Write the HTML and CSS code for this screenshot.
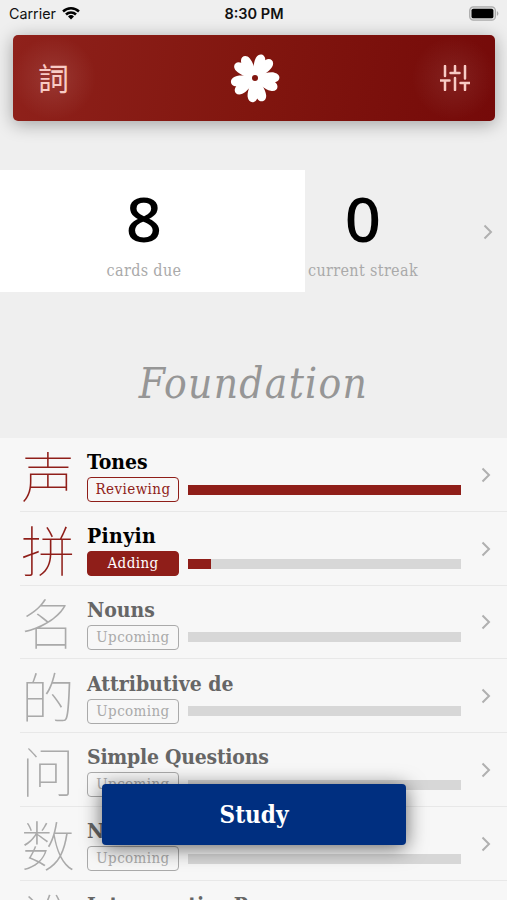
FILE: index.html
```html
<!DOCTYPE html>
<html lang="en">
<head>
<meta charset="utf-8">
<title>Foundation</title>
<link rel="stylesheet" href="styles.css">
</head>
<body>
<main class="app">
  <header class="status">
    <div class="carrier"><span class="carrier-name">Carrier</span>
      <svg class="wifi" viewBox="0 0 18 14"><path d="M0.2 4.6a12.6 12.6 0 0 1 17.6 0l-1.7 1.8a10.1 10.1 0 0 0-14.2 0z"/><path d="M3.1 7.6a8.5 8.5 0 0 1 11.8 0l-1.8 1.8a6 6 0 0 0-8.2 0z"/><path d="M6 10.5a4.3 4.3 0 0 1 6 0l-3 3z"/></svg>
    </div>
    <div class="clock">8:30 PM</div>
    <svg class="battery" viewBox="0 0 31 15"><rect x=".7" y=".7" width="26.6" height="13.6" rx="3.8" fill="#ddd" stroke="#aaa" stroke-width="1.2"/><rect x="2.6" y="2.5" width="22.6" height="10" rx="2"/><path d="M28.8 5v5q1.6-.8 1.6-2.5T28.8 5z" fill="#aaa"/></svg>
  </header>
  <nav class="navbar">
    <span class="glyph-btn">詞</span>
    <svg class="flower" viewBox="-25 -25 50 50">
      <defs><path id="petal" d="M-4 0C-4.500-6-9.300-12-9.300-18C-9.300-24.800-2.500-25.800 0-20.500C2.500-25.800 9.300-24.800 9.300-18C9.300-12 4.500-6 4 0Z"/></defs>
      <g fill="#fff"><use href="#petal" transform="rotate(30)"/><use href="#petal" transform="rotate(102)"/><use href="#petal" transform="rotate(174)"/><use href="#petal" transform="rotate(246)"/><use href="#petal" transform="rotate(318)"/></g>
      <circle r="3" fill="#81160f"/>
    </svg>
    <svg class="sliders" viewBox="0 0 30 26"><path d="M5 1v10M.5 15.500h9M5 15.500V25M15 1v7M10.500 8h9M15 13v12M25 1v12.500M20.500 18h9M25 18v7"/></svg>
  </nav>
  <section class="stats">
    <div class="stat due"><div class="num">8</div><div class="label">cards due</div></div>
    <div class="stat streak"><div class="num">0</div><div class="label">current streak</div></div>
    <svg class="chev" viewBox="0 0 10 16"><path d="M1.500 1.500 8 8l-6.500 6.500"/></svg>
  </section>
  <h1>Foundation</h1>
  <ul class="list">
    <li class="row active"><span class="hanzi">声</span><div class="body"><h2>Tones</h2><div class="meta"><span class="tag">Reviewing</span><span class="track"><span class="fill" style="width:100%"></span></span></div></div><svg class="chev" viewBox="0 0 10 16"><path d="M1.500 1.500 8 8l-6.500 6.500"/></svg></li>
    <li class="row active"><span class="hanzi">拼</span><div class="body"><h2 class="loose">Pinyin</h2><div class="meta"><span class="tag solid">Adding</span><span class="track"><span class="fill" style="width:8.400%"></span></span></div></div><svg class="chev" viewBox="0 0 10 16"><path d="M1.500 1.500 8 8l-6.500 6.500"/></svg></li>
    <li class="row"><span class="hanzi">名</span><div class="body"><h2>Nouns</h2><div class="meta"><span class="tag">Upcoming</span><span class="track"></span></div></div><svg class="chev" viewBox="0 0 10 16"><path d="M1.500 1.500 8 8l-6.500 6.500"/></svg></li>
    <li class="row"><span class="hanzi">的</span><div class="body"><h2>Attributive de</h2><div class="meta"><span class="tag">Upcoming</span><span class="track"></span></div></div><svg class="chev" viewBox="0 0 10 16"><path d="M1.500 1.500 8 8l-6.500 6.500"/></svg></li>
    <li class="row"><span class="hanzi">问</span><div class="body"><h2 class="tight">Simple Questions</h2><div class="meta"><span class="tag">Upcoming</span><span class="track"></span></div></div><svg class="chev" viewBox="0 0 10 16"><path d="M1.500 1.500 8 8l-6.500 6.500"/></svg></li>
    <li class="row"><span class="hanzi">数</span><div class="body"><h2>Numbers</h2><div class="meta"><span class="tag">Upcoming</span><span class="track"></span></div></div><svg class="chev" viewBox="0 0 10 16"><path d="M1.500 1.500 8 8l-6.500 6.500"/></svg></li>
    <li class="row"><span class="hanzi">谁</span><div class="body"><h2>Interrogative Pronouns</h2></div></li>
  </ul>
  <button class="study">Study</button>
</main>
</body>
</html>
```
FILE: styles.css
```css
* { box-sizing: border-box; }
body { margin: 0; background: #efefef; }
.app { position: relative; width: 507px; height: 900px; overflow: hidden; font-family: "DejaVu Serif Condensed", "DejaVu Serif", serif; font-stretch: condensed; }
.status { height: 35px; padding: 0 8px 8px 9px; display: grid; grid-template-columns: 1fr auto 1fr; align-items: center; font-family: Inter, sans-serif; color: #111; }
.carrier { display: flex; align-items: center; gap: 6px; }
.carrier-name { font-size: 14.300px; }
.wifi { width: 18px; height: 14px; margin-top: -2px; }
.clock { font-weight: 600; font-size: 14.500px; }
.battery { width: 30px; height: 15px; justify-self: end; }
.navbar { height: 86px; margin: 0 12px 0 13px; padding: 0 25px; display: flex; align-items: center; justify-content: space-between; border-radius: 5px; background: radial-gradient(circle at 41px 43px, #ffffff1c, transparent 42px), radial-gradient(circle at 441px 43px, #ffffff16, transparent 42px), linear-gradient(100deg, #8f211b, #81160f 50%, #750a09); box-shadow: 0 3px 18px #0005; color: #f8cbc5; }
.glyph-btn { width: 31px; margin-top: -2px; font: 31px/40px "Noto Sans CJK TC", sans-serif; }
.flower { width: 50px; height: 50px; }
.sliders { width: 30px; height: 26px; fill: none; stroke: #f8cbc5; stroke-width: 2.500; stroke-linecap: round; }
.stats { height: 122px; margin-top: 49px; display: flex; align-items: center; }
.stat { height: 122px; text-align: center; }
.due { width: 305px; padding-right: 17px; background: #fff; }
.streak { width: 116px; }
.num { height: 91px; padding-top: 5px; font: 500 61px/88px "Noto Sans", sans-serif; color: #000; transform: scaleX(1.04); }
.label { font-size: 16px; line-height: 20px; letter-spacing: .35px; color: #aaa; white-space: nowrap; }
.chev { width: 10px; height: 16px; flex: none; fill: none; stroke: #b0b0b0; stroke-width: 2; }
.stats .chev { margin-left: 62px; margin-top: 2px; }
h1 { height: 146px; margin: 0; padding-top: 62px; text-align: center; font-size: 42px; line-height: 60px; letter-spacing: 1.300px; font-style: italic; font-weight: 400; color: #969696; }
.list { margin: 0; padding: 0; list-style: none; background: #f7f7f7; }
.row { height: 73.750px; padding: 0 16px 0 21px; display: flex; align-items: center; color: #aaa; background: linear-gradient(#e8e8e8, #e8e8e8) 20px 100% / 100% 1px no-repeat; }
.active { color: #8f1e19; }
.hanzi { width: 66px; font: 100 54px/72px "Noto Sans CJK SC", sans-serif; padding-top: 0; }
.body { width: 374px; height: 73px; padding-top: 12px; }
h2 { margin: 0; font-size: 21px; line-height: 24px; font-weight: 700; color: #666; white-space: nowrap; }
.tight { letter-spacing: -.25px; }
.loose { letter-spacing: .35px; }
.active h2 { color: #000; }
.meta { display: flex; align-items: center; gap: 9px; padding-top: 3px; }
.tag { width: 92px; height: 25px; border: 1.500px solid currentColor; border-radius: 4px; text-align: center; font-size: 15px; line-height: 22px; letter-spacing: .4px; }
.solid { background: #8f1e19; border-color: #8f1e19; color: #fff; }
.track { width: 273px; height: 10px; background: #d7d7d7; }
.fill { display: block; height: 10px; background: #8f1e19; }
.row .chev { margin-left: 20px; }
.study { position: absolute; left: 102px; top: 784px; width: 304px; height: 61px; border: 0; border-radius: 4px; background: #002f80; color: #fff; font: 700 24px/60px "DejaVu Serif Condensed", "DejaVu Serif", serif; box-shadow: 0 3px 20px #0009; }
```
